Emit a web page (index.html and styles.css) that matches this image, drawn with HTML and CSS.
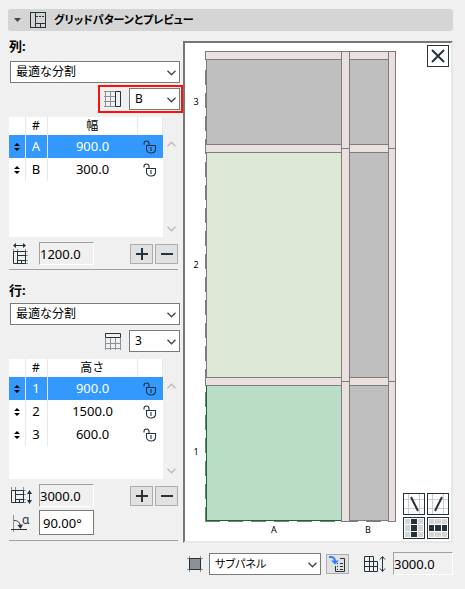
FILE: index.html
```html
<!DOCTYPE html>
<html lang="ja">
<head>
<meta charset="utf-8">
<title>グリッドパターンとプレビュー</title>
<link rel="stylesheet" href="styles.css">
</head>
<body>
<svg class="defs" aria-hidden="true">
  <symbol id="chevron" viewBox="0 0 9 6"><path d="M.5 .8l4 4 4-4" fill="none" stroke="currentColor" stroke-width="1.3"/></symbol>
  <symbol id="lock" viewBox="0 0 14 14"><path d="M1 4.500V3.500a2.500 2.500 0 0 1 5 0V5M3.500 5.500h9V9c0 2.500-2 4-4.500 4s-4.500-1.500-4.500-4zM8 7v4" fill="none" stroke="currentColor" stroke-width="1.1"/></symbol>
  <symbol id="sort" viewBox="0 0 6 8"><path d="M0 3h6L3 0zM0 5h6L3 8z" fill="#000"/></symbol>
  <symbol id="plus" viewBox="0 0 12 12"><path d="M0 6h12M6 0v12" fill="none" stroke="#24323c" stroke-width="2"/></symbol>
  <symbol id="minus" viewBox="0 0 12 12"><path d="M0 6h12" fill="none" stroke="#24323c" stroke-width="2"/></symbol>
</svg>

<main class="panel">
  <button class="title" type="button" aria-expanded="true">
    <svg class="tri" viewBox="0 0 7 4"><path d="M0 0h7L3.500 4z" fill="#444"/></svg>
    <svg class="title-icon" viewBox="0 0 16 16" fill="none" stroke="#24323c" shape-rendering="crispEdges"><path d="M.5 .5h15v15H.5zM5.500 .5v15M5.500 11.500h10M10.500 11.500v4"/><path d="M6 4.500h9" stroke-dasharray="2 1"/></svg>
    <span>グリッドパターンとプレビュー</span>
  </button>

  <div class="body">
    <div class="side">
      <section class="group">
        <h2>列:</h2>
        <div class="select">
          <select aria-label="列の分割方法"><option>最適な分割</option></select>
          <svg class="chev"><use href="#chevron"/></svg>
        </div>
        <div class="pick marked">
          <svg class="pick-icon" viewBox="0 0 17 17" fill="none"><path d="M1.500 0v16M6.500 0v16M0 .5h11M0 5.500h11M0 10.500h11M0 15.500h11" stroke="#8b9196"/><path d="M11.500 .5h5v15h-5z" stroke="#24323c"/></svg>
          <div class="select small">
            <select aria-label="列"><option>B</option></select>
            <svg class="chev"><use href="#chevron"/></svg>
          </div>
        </div>
        <div class="list">
          <div class="sheet">
            <table>
              <thead><tr><th class="c-sort"></th><th class="c-num">#</th><th>幅</th><th class="c-lock"></th></tr></thead>
              <tbody>
                <tr class="on"><td><svg class="sort"><use href="#sort"/></svg></td><td>A</td><td>900.0</td><td><svg class="lock"><use href="#lock"/></svg></td></tr>
                <tr><td><svg class="sort"><use href="#sort"/></svg></td><td>B</td><td>300.0</td><td><svg class="lock"><use href="#lock"/></svg></td></tr>
              </tbody>
            </table>
          </div>
          <div class="scroll"><svg class="up"><use href="#chevron"/></svg><svg><use href="#chevron"/></svg></div>
        </div>
        <div class="field-row">
          <label for="width"><svg class="size-icon" viewBox="0 0 22 22" fill="none"><path d="M2.500 6v3M6.500 6v3M14.500 6v3M14 8.500h3M14 12.500h3M14 17.500h3M14 20.500h3" stroke="#8b9196"/><path d="M14.500 8.500h-12v12h12zM6.500 8.500v12M6.500 12.500h8M6.500 17.500h8M10.500 17.500v3M4 2.500h9" stroke="#24323c"/><path d="M2 2.500l3-2.500v5zM15 2.500l-3-2.500v5z" fill="#24323c"/></svg></label>
          <input id="width" class="readonly" value="1200.0" readonly aria-label="全幅">
          <div class="pm">
            <button type="button" aria-label="追加"><svg><use href="#plus"/></svg></button>
            <button type="button" aria-label="削除"><svg><use href="#minus"/></svg></button>
          </div>
        </div>
      </section>

      <section class="group second">
        <h2>行:</h2>
        <div class="select">
          <select aria-label="行の分割方法"><option>最適な分割</option></select>
          <svg class="chev"><use href="#chevron"/></svg>
        </div>
        <div class="pick">
          <svg class="pick-icon" viewBox="0 0 17 17" fill="none"><path d="M1.500 5v12M6.500 5v12M11.500 5v12M16.500 5v12M1 10.500h16M1 15.500h16" stroke="#8b9196"/><path d="M1.500 .5h15v4h-15z" stroke="#24323c"/></svg>
          <div class="select small">
            <select aria-label="行"><option>3</option></select>
            <svg class="chev"><use href="#chevron"/></svg>
          </div>
        </div>
        <div class="list">
          <div class="sheet">
            <table>
              <thead><tr><th class="c-sort"></th><th class="c-num">#</th><th>高さ</th><th class="c-lock"></th></tr></thead>
              <tbody>
                <tr class="on"><td><svg class="sort"><use href="#sort"/></svg></td><td>1</td><td>900.0</td><td><svg class="lock"><use href="#lock"/></svg></td></tr>
                <tr><td><svg class="sort"><use href="#sort"/></svg></td><td>2</td><td>1500.0</td><td><svg class="lock"><use href="#lock"/></svg></td></tr>
                <tr><td><svg class="sort"><use href="#sort"/></svg></td><td>3</td><td>600.0</td><td><svg class="lock"><use href="#lock"/></svg></td></tr>
              </tbody>
            </table>
          </div>
          <div class="scroll"><svg class="up"><use href="#chevron"/></svg><svg><use href="#chevron"/></svg></div>
        </div>
        <div class="field-row">
          <label for="height"><svg class="size-icon" viewBox="0 0 22 22" fill="none"><path d="M.5 2v3M4.500 2v3M12.500 2v3M12 5.500h3M12 9.500h3M12 14.500h3M12 17.500h3" stroke="#8b9196"/><path d="M12.500 5.500H.5v12h12zM4.500 5.500v12M4.500 9.500h8M4.500 14.500h8M8.500 14.500v3M18.500 7v10" stroke="#24323c"/><path d="M18.500 5l-2.500 4h5zM18.500 19l-2.500-4h5z" fill="#24323c"/></svg></label>
          <input id="height" class="readonly" value="3000.0" readonly aria-label="全高">
          <div class="pm">
            <button type="button" aria-label="追加"><svg><use href="#plus"/></svg></button>
            <button type="button" aria-label="削除"><svg><use href="#minus"/></svg></button>
          </div>
        </div>
        <div class="field-row angle">
          <label for="angle"><svg class="size-icon" viewBox="0 0 22 22" fill="none"><path d="M2.500 3v17" stroke="#8b9196"/><path d="M0 17.500h16M3 8.500c4 0 6 2 6.500 6" stroke="#24323c"/><path d="M9.500 17l-3-4 5.500-.5z" fill="#24323c"/><text x="11" y="12" class="alpha">α</text></svg></label>
          <input id="angle" value="90.00°" aria-label="角度">
        </div>
      </section>
    </div>

    <div class="view">
      <div class="canvas">
        <svg class="drawing" viewBox="185 43 266 498" role="img" aria-label="プレビュー" shape-rendering="crispEdges">
          <g stroke="#7d7d7d" fill="#bfbfbf">
            <path d="M206.500 59.500h135v85h-135zM349.500 59.500h39v85h-39zM349.500 152.500h39v225h-39zM349.500 385.500h39v135h-39z"/>
            <path d="M206.500 152.500h135v225h-135z" fill="#dde8d7"/>
            <path d="M206.500 385.500h135v135h-135z" fill="#b9ddc5" stroke="#116b2b"/>
            <path d="M205.500 51.500h136v8h-136zM205.500 144.500h136v8h-136zM205.500 377.500h136v8h-136zM349.500 51.500h39v8h-39zM349.500 144.500h39v8h-39zM349.500 377.500h39v8h-39z" fill="#e9e0df"/>
            <path d="M341.500 51.500h8v470h-8zM388.500 51.500h7v470h-7z" fill="#e9e0df"/>
            <path d="M341 148.500h9M388 148.500h8M341 381.500h9M388 381.500h8"/>
            <path d="M205.500 70v452" stroke-dasharray="15 8"/>
            <path d="M205 521.500h184" stroke-dasharray="15 8"/>
          </g>
          <g class="marks">
            <text x="196" y="105">3</text><text x="196" y="268">2</text><text x="196" y="455">1</text>
            <text x="274" y="533">A</text><text x="368" y="533">B</text>
          </g>
        </svg>
        <button class="tool close" type="button" aria-label="閉じる"><svg viewBox="0 0 20 20"><path d="M4 4l12 12M16 4L4 16" fill="none" stroke="#24323c" stroke-width="2"/></svg></button>
        <div class="tools">
          <button class="tool" type="button" aria-label="左斜め"><svg viewBox="0 0 20 20" fill="none"><path d="M0 5.500h20M0 14.500h20M4.500 0v20M15.500 0v20" stroke="#ccc"/><path d="M7 3l7 14" stroke="#24323c" stroke-width="2"/></svg></button>
          <button class="tool" type="button" aria-label="右斜め"><svg viewBox="0 0 20 20" fill="none"><path d="M0 5.500h20M0 14.500h20M4.500 0v20M15.500 0v20" stroke="#ccc"/><path d="M14 3L7 17" stroke="#24323c" stroke-width="2"/></svg></button>
          <button class="tool" type="button" aria-label="列選択"><svg viewBox="0 0 20 20"><path d="M1 1h5v5H1zM14 1h5v5h-5zM1 7h5v6H1zM14 7h5v6h-5zM1 14h5v5H1zM14 14h5v5h-5z" fill="#d5d5d5"/><path d="M7 1h6v5H7zM7 7h6v6H7zM7 14h6v5H7z" fill="#24323c"/></svg></button>
          <button class="tool" type="button" aria-label="行選択"><svg viewBox="0 0 20 20"><path d="M1 1h5v5H1zM7 1h6v5H7zM14 1h5v5h-5zM1 14h5v5H1zM7 14h6v5H7zM14 14h5v5h-5z" fill="#d5d5d5"/><path d="M1 7h5v6H1zM7 7h6v6H7zM14 7h5v6h-5z" fill="#24323c"/></svg></button>
        </div>
      </div>
      <div class="bar">
        <svg class="sub-icon" viewBox="0 0 16 16" fill="none"><path d="M2.500 0v16M13.500 0v16M0 2.500h16M0 13.500h16" stroke="#8b9196"/><path d="M2.500 2.500h11v11h-11z" fill="#8b9196" stroke="#24323c"/></svg>
        <div class="select">
          <select aria-label="種類"><option>サブパネル</option></select>
          <svg class="chev"><use href="#chevron"/></svg>
        </div>
        <button class="apply" type="button" aria-label="適用"><svg viewBox="0 0 18 18" fill="none"><path d="M11 3.500h4.500v13h-9V11" stroke="#24323c"/><path d="M8 8.500h1M11 8.500h3M8 11.500h1M11 11.500h3M8 14.500h1M11 14.500h3" stroke="#24323c"/><path d="M0 2c4-.5 6 1 6 4.500" stroke="#2a7fff" stroke-width="2"/><path d="M2 5.500h8l-4 4z" fill="#2a7fff"/></svg></button>
        <label for="total"><svg class="total-icon" viewBox="0 0 22 18" fill="none" stroke="#24323c"><path d="M.5 1.500h9v15h-9zM5.500 1.500v15M.5 6.500h13v10h-4M.5 11.500h13M18.500 2v14"/><path d="M16 4.500l2.500-3 2.500 3M16 13.500l2.500 3 2.500-3"/></svg></label>
        <input id="total" class="readonly" value="3000.0" readonly aria-label="高さ">
      </div>
    </div>
  </div>
</main>
</body>
</html>
```

FILE: styles.css
```css
* { box-sizing: border-box; }

body {
  margin: 0;
  background: #f0f0f0;
  color: #000;
  font: 13px/18px "Noto Sans", "Noto Sans CJK JP", sans-serif;
}

button, input, select { font: inherit; color: inherit; margin: 0; }
svg { display: block; flex: none; }
.defs { position: absolute; width: 0; height: 0; }

.panel { padding: 9px 12px 14px 8px; }

.title {
  display: flex;
  align-items: center;
  width: 100%;
  height: 22px;
  padding: 0 6px;
  border: 0;
  border-radius: 3px;
  background: #d5d5d5;
  font-size: 11px;
  font-weight: 700;
  font-feature-settings: "palt";
}
.tri { width: 7px; height: 4px; }
.title-icon { width: 16px; height: 16px; margin: 0 8px 0 9px; }

.body {
  display: grid;
  grid-template-columns: 172px minmax(0, 1fr);
  column-gap: 3px;
  padding-top: 7px;
}

.side { padding-left: 1px; }
.second { padding-top: 11px; }
.group::after {
  content: "";
  display: block;
  height: 1px;
  margin: 4px 2px 0 0;
  background: #a0a0a0;
}
.second::after { margin-top: 5px; }

h2 { margin: 0; height: 23px; font-size: 13px; line-height: 16px; font-weight: 700; }
.second h2 { height: 22px; line-height: 18px; }

.select { position: relative; height: 22px; margin-left: 1px; }
select {
  appearance: none;
  display: block;
  width: 100%;
  height: 22px;
  padding: 0 18px 0 5px;
  border: 1px solid #7a7a7a;
  border-radius: 0;
  background: #fff;
  font-size: 12px;
  line-height: 18px;
}
.chev {
  position: absolute;
  right: 4px;
  top: 9px;
  width: 9px;
  height: 6px;
  color: #444;
  pointer-events: none;
}

.pick {
  display: flex;
  align-items: center;
  justify-content: flex-end;
  gap: 7px;
  margin: 2px -3px 4px 89px;
  height: 28px;
  padding-right: 1px;
  border: 2px solid transparent;
}
.pick.marked { border-color: #ff0f0f; }
.pick-icon { width: 17px; height: 17px; }
.small { width: 51px; }

.list { display: flex; height: 120px; }
.sheet { flex: 1; background: #fff; }
table { width: 100%; border-collapse: collapse; table-layout: fixed; }
th, td { padding: 0; border-right: 1px solid #e8e8e8; text-align: center; }
th { height: 18px; font-weight: 400; font-size: 12px; line-height: 18px; }
td { height: 23px; line-height: 23px; }
td:nth-child(n+3) { border-right: 0; }
.c-sort { width: 16px; }
.c-num { width: 22px; }
.c-lock { width: 25px; }
.on { background: #3399ff; color: #fff; }
.sort { width: 6px; height: 8px; margin: 0 auto; }
.lock { width: 14px; height: 14px; margin: 0 auto; color: #24323c; }

.scroll {
  display: flex;
  flex-direction: column;
  justify-content: space-between;
  align-items: center;
  width: 17px;
  padding: 24px 0 5px;
  color: #bbb;
}
.scroll svg { width: 9px; height: 6px; }
.up { transform: rotate(180deg); }

.field-row { display: flex; align-items: center; margin-top: 5px; height: 23px; }
.angle { margin-top: 3px; height: 25px; }
.size-icon { width: 22px; height: 22px; margin: 0 6px 0 2px; overflow: visible; }
.alpha { font-size: 12px; fill: #24323c; }

input {
  width: 55px;
  height: 25px;
  padding: 0 3px;
  border: 1px solid #7a7a7a;
  border-radius: 0;
  background: #fff;
}
input.readonly {
  height: 23px;
  padding: 0;
  border-color: #a0a0a0 #fff #fff #a0a0a0;
  background: #f0f0f0;
}

.pm { display: flex; gap: 2px; margin: 0 2px 0 auto; }
.pm button, .apply {
  display: grid;
  place-items: center;
  width: 23px;
  height: 20px;
  padding: 0;
  border: 1px solid #adadad;
  background: #e1e1e1;
}
.pm svg { width: 12px; height: 12px; }

.view { padding-top: 3px; }
.canvas {
  position: relative;
  border: 2px solid;
  border-color: #767676 #e8e8e8 #e8e8e8 #767676;
  background: #fff;
}
.drawing { width: 100%; height: auto; }
.marks { font-size: 9px; text-anchor: middle; fill: #000; }

.tool {
  width: 22px;
  height: 22px;
  padding: 0;
  border: 1px solid #24323c;
  background: #fff;
}
.close { position: absolute; top: 2px; right: 2px; }
.tools {
  position: absolute;
  right: 2px;
  bottom: 2px;
  display: grid;
  grid-template-columns: 22px 22px;
  gap: 2px;
}

.bar { display: flex; align-items: center; margin-top: 9px; padding-left: 4px; }
.sub-icon { width: 16px; height: 16px; margin-right: 5px; }
.bar .select { flex: 1; }
.bar select { font-size: 11px; font-feature-settings: "palt"; }
.apply { margin: 0 15px 0 5px; }
.apply svg { width: 18px; height: 18px; }
.total-icon { width: 22px; height: 18px; margin-right: 7px; }
.bar input { width: 60px; }
```
